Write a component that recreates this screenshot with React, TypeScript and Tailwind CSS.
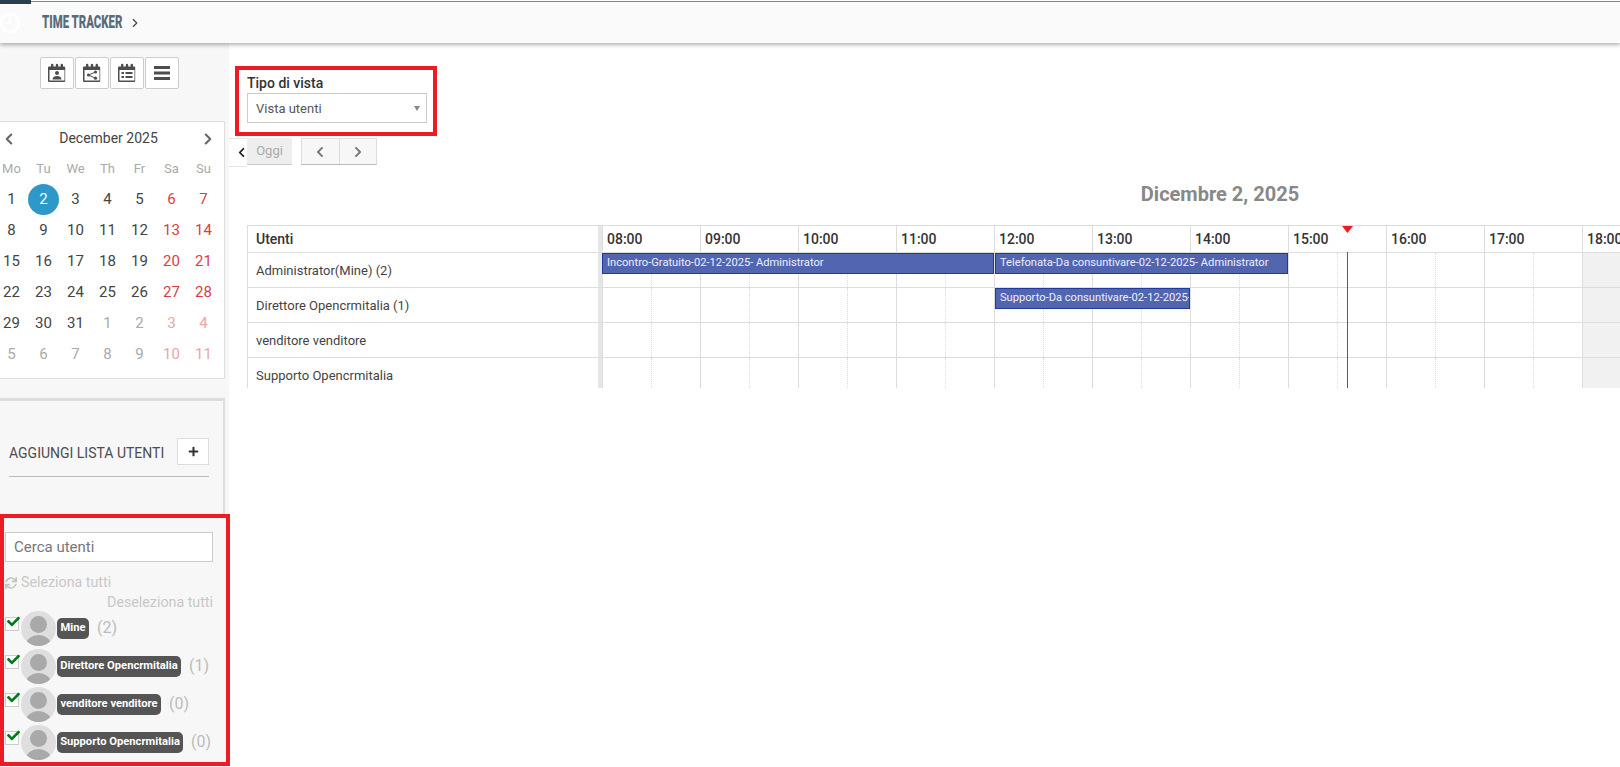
import { ChevronLeft, ChevronRight } from "lucide-react";
import { FaCheck, FaChevronLeft, FaChevronRight, FaPlus, FaSync } from "react-icons/fa";

const WEEK = ["Mo", "Tu", "We", "Th", "Fr", "Sa", "Su"];
const DAYS: { d: number; out?: boolean }[] = [
  ...Array.from({ length: 31 }, (_, i) => ({ d: i + 1 })),
  ...Array.from({ length: 11 }, (_, i) => ({ d: i + 1, out: true })),
];
const HOURS = ["08:00", "09:00", "10:00", "11:00", "12:00", "13:00", "14:00", "15:00", "16:00", "17:00", "18:00"];
const ROWS = ["Administrator(Mine) (2)", "Direttore Opencrmitalia (1)", "venditore venditore", "Supporto Opencrmitalia"];
const USERS = [
  { name: "Mine", count: "(2)", w: "w-[32px]" },
  { name: "Direttore Opencrmitalia", count: "(1)", w: "w-[124px]" },
  { name: "venditore venditore", count: "(0)", w: "w-[104px]" },
  { name: "Supporto Opencrmitalia", count: "(0)", w: "w-[126px]" },
];

function CalBase({ children }: { children: React.ReactNode }) {
  return (
    <svg width="20" height="20" viewBox="0 0 20 20" fill="#4d4d4d">
      <path d="M1 4.5a1 1 0 0 1 1-1h2V2a1.2 1.2 0 0 1 2.4 0v1.500h2.400V2a1.200 1.200 0 0 1 2.400 0v1.500h2.400V2a1.200 1.200 0 0 1 2.400 0v1.500h1.200a1 1 0 0 1 1 1V18a1 1 0 0 1-1 1H2a1 1 0 0 1-1-1z" />
      <rect x="2.500" y="7" width="15" height="10.500" fill="#fff" />
      {children}
    </svg>
  );
}

function IconButton({ children }: { children: React.ReactNode }) {
  return (
    <div className="w-[34px] h-[32px] flex items-center justify-center bg-white border border-[#ccc] rounded-[2px]">
      {children}
    </div>
  );
}

function Avatar() {
  return (
    <svg width="35" height="35" viewBox="0 0 35 35" className="shrink-0">
      <defs>
        <clipPath id="avatar-clip">
          <circle cx="17.500" cy="17.500" r="17.500" />
        </clipPath>
      </defs>
      <circle cx="17.500" cy="17.500" r="17.500" fill="#dedede" />
      <g clipPath="url(#avatar-clip)" fill="#a9a9a9">
        <circle cx="17.500" cy="13.500" r="8.500" />
        <ellipse cx="17.500" cy="34" rx="12.500" ry="10" />
      </g>
    </svg>
  );
}

function Sidebar() {
  return (
    <aside className="w-[229px] shrink-0 h-full bg-[#f7f7f7] flex flex-col overflow-hidden">
      <div className="flex justify-start gap-px pl-[40px] pt-[14px] h-[78px] shrink-0">
        <IconButton>
          <CalBase>
            <circle cx="10" cy="10" r="2" />
            <path d="M5.500 16.500c0-2.500 2-3.500 4.500-3.500s4.500 1 4.500 3.500z" />
          </CalBase>
        </IconButton>
        <IconButton>
          <CalBase>
            <circle cx="6.500" cy="12" r="1.600" />
            <circle cx="13.500" cy="9" r="1.600" />
            <circle cx="13.500" cy="15.200" r="1.600" />
            <path d="M6.500 12l7-3M6.500 12l7 3.200" stroke="#4d4d4d" strokeWidth="1" />
          </CalBase>
        </IconButton>
        <IconButton>
          <CalBase>
            <rect x="4.500" y="9" width="2.500" height="2" />
            <rect x="8.500" y="9" width="7" height="2" />
            <rect x="4.500" y="13" width="2.500" height="2" />
            <rect x="8.500" y="13" width="7" height="2" />
          </CalBase>
        </IconButton>
        <IconButton>
          <svg width="16" height="14" viewBox="0 0 16 14" fill="#4d4d4d">
            <rect x="0" y="0" width="16" height="3" />
            <rect x="0" y="5.500" width="16" height="3" />
            <rect x="0" y="11" width="16" height="3" />
          </svg>
        </IconButton>
      </div>

      <div className="w-[225px] h-[258px] shrink-0 bg-white border-r border-b border-t border-[#ddd]">
        <div className="flex items-center justify-between pr-[7px] h-[33px]">
          <ChevronLeft size={18} strokeWidth={2.750} color="#666" />
          <span className="text-[14px] text-[#444]">December 2025</span>
          <ChevronRight size={18} strokeWidth={2.750} color="#666" />
        </div>
        <div className="grid grid-cols-7 w-[224px] -ml-[4.500px] text-center">
          {WEEK.map((w) => (
            <div key={w} className="h-[29px] leading-[28px] text-[13px] text-[#aaa]">{w}</div>
          ))}
          {DAYS.map((x, i) => {
            const weekend = i % 7 >= 5;
            const selected = !x.out && x.d === 2;
            let color = "text-[#444]";
            if (x.out) color = weekend ? "text-[#eda5a5]" : "text-[#aaa]";
            else if (weekend) color = "text-[#dc3c42]";
            return (
              <div key={i} className="h-[31px] flex items-center justify-center">
                <span className={`w-[31px] h-[31px] rounded-full flex items-center justify-center text-[15px] ${selected ? "bg-[#2e99c9] text-white" : color}`}>
                  {x.d}
                </span>
              </div>
            );
          })}
        </div>
      </div>

      <div className="mt-[19px] w-[225px] flex-1 border-t-[3px] border-r-[2px] border-[#ddd] flex flex-col">
        <div className="pl-[9px] pr-[14px] pt-[37px] h-[114px] shrink-0">
          <div className="flex items-center justify-between pb-[11px] border-b border-[#bbb]">
            <span className="text-[14px] text-[#4d4d4d] pt-[3px]">AGGIUNGI LISTA UTENTI</span>
            <span className="w-[32px] h-[27px] flex items-center justify-center bg-white border border-[#ddd]">
              <FaPlus size={11} color="#333" />
            </span>
          </div>
        </div>
      </div>
    </aside>
  );
}

function UserFilter() {
  return (
    <section className="absolute left-0 top-[514px] w-[230px] h-[252px] border-4 border-[#ed1c24] bg-[#f7f7f7] pl-px pr-[13px] pt-[14px]">
      <div className="h-[30px] bg-white border border-[#ccc] px-[8px] flex items-center text-[15px] text-[#777]">Cerca utenti</div>
      <div className="flex items-center gap-[4px] h-[20px] mt-[11px] text-[14.250px] text-[#c8c8c8]">
        <FaSync size={12} color="#c4c4c4" />
        <span>Seleziona tutti</span>
      </div>
      <div className="text-right h-[19px] leading-[19px] text-[14.250px] text-[#c8c8c8]">Deseleziona tutti</div>
      <div className="flex flex-col mt-[-3px]">
        {USERS.map((u) => (
          <div key={u.name} className="h-[38px] flex items-center">
            <span className="relative w-[14px] h-[14px] mb-[9px] mr-[2px] shrink-0 bg-white border border-[#ccc]">
              <FaCheck size={13} color="#007a1c" className="absolute left-px -top-[3px]" />
            </span>
            <Avatar />
            <span className={`h-[21px] ml-px flex items-center justify-center rounded-[5px] bg-[#555] text-white text-[11.200px] font-bold whitespace-nowrap shrink-0 ${u.w}`}>
              {u.name}
            </span>
            <span className="ml-[8px] text-[16px] text-[#bbb]">{u.count}</span>
          </div>
        ))}
      </div>
    </section>
  );
}

function HourCells() {
  return (
    <>
      {HOURS.map((h, i) => (
        <div key={h} className={`relative w-[98px] h-full shrink-0 border-l border-[#ddd] ${i >= 10 ? "bg-[#f1f1f1]" : ""}`}>
          <div className="absolute left-[48px] top-0 bottom-0 border-l border-dotted border-[#ddd]" />
        </div>
      ))}
    </>
  );
}

function EventBar({ text, className }: { text: string; className: string }) {
  return (
    <div className={`absolute top-0 h-[21px] bg-[#5266b0] border border-[#1f3a9e] text-[#eef] text-[11.150px] leading-[18px] pl-[4px] overflow-hidden whitespace-nowrap ${className}`}>
      {text}
    </div>
  );
}

function Timeline() {
  return (
    <div className="relative w-[1600px] h-[163px] border-l border-t border-[#ddd] overflow-hidden text-[#444]">
      <div className="flex h-[27px] border-b border-[#ddd]">
        <div className="w-[354px] shrink-0 pl-[8px] text-[14px] font-medium text-[#333] leading-[26px] border-r-[4px] border-[#e6e6e6]">Utenti</div>
        {HOURS.map((h) => (
          <div key={h} className="w-[98px] shrink-0 border-l border-[#ddd] pl-[4px] text-[14px] font-medium text-[#333] leading-[26px]">{h}</div>
        ))}
      </div>
      {ROWS.map((r, i) => (
        <div key={r} className="flex h-[35px] border-b border-[#ddd]">
          <div className="w-[354px] shrink-0 pl-[8px] pt-[10px] text-[13px] leading-[16px] border-r-[4px] border-[#e6e6e6]">{r}</div>
          <div className="relative flex h-full">
            <HourCells />
            {i === 0 && (
              <>
                <EventBar text="Incontro-Gratuito-02-12-2025- Administrator" className="left-0 w-[392px]" />
                <EventBar text="Telefonata-Da consuntivare-02-12-2025- Administrator" className="left-[393px] w-[293px]" />
              </>
            )}
            {i === 1 && <EventBar text="Supporto-Da consuntivare-02-12-2025-" className="left-[393px] w-[195px]" />}
          </div>
        </div>
      ))}
      <div className="absolute left-[1099px] top-[26px] bottom-0 w-px bg-[#ed1c24]" />
      <svg width="11" height="7" viewBox="0 0 11 7" className="absolute left-[1094px] top-0">
        <path d="M0 0h11L5.500 7z" fill="#ed1c24" />
      </svg>
    </div>
  );
}

export default function App() {
  return (
    <div className="relative w-[1620px] h-[767px] overflow-hidden bg-white flex flex-col font-['Roboto',sans-serif]">
      <header className="relative z-10 h-[43px] shrink-0 bg-[#fafafa] shadow-[0_2px_4px_rgba(0,0,0,0.3)]">
        <div className="flex h-[2px]">
          <div className="w-[31px] h-[4px] bg-[#2b3e50]" />
          <div className="flex-1 h-px mt-px bg-[#e0663e]" />
        </div>
        <div className="flex items-center h-[41px]">
          <svg width="22" height="22" viewBox="0 0 22 22" className="shrink-0 -ml-px">
            <circle cx="11" cy="11" r="9" fill="none" stroke="#fff" strokeWidth="3" />
            <path d="M11 5v6H6" fill="none" stroke="#fff" strokeWidth="1.500" />
          </svg>
          <span className="ml-[21px] w-[83px] text-[19px] font-black text-[#5a6b7b] whitespace-nowrap origin-left scale-x-[0.6]">TIME TRACKER</span>
          <ChevronRight size={14} color="#444" className="ml-[3px]" />
        </div>
      </header>

      <div className="flex flex-1 min-h-0">
        <Sidebar />
        <main className="flex-1 min-w-0 overflow-hidden">
          <div className="ml-[6px] mt-[23px] w-[202px] h-[70px] border-4 border-[#ed1c24] px-[8px]">
            <div className="text-[14px] font-medium text-[#333] leading-[20px] mt-[3px]">Tipo di vista</div>
            <div className="h-[30px] w-[180px] border border-[#ccc] flex items-center justify-between pl-[8px] pr-[6px] text-[13px] text-[#555]">
              <span className="pt-px">Vista utenti</span>
              <span className="w-0 h-0 border-l-[3.500px] border-r-[3.500px] border-t-[5px] border-l-transparent border-r-transparent border-t-[#888]" />
            </div>
          </div>
          <div className="flex items-start mt-[2px] h-[28px]">
            <div className="w-[18px] h-[29px] flex items-center justify-end border-t border-b border-[#e6e6e6]">
              <FaChevronLeft size={11} color="#222" />
            </div>
            <div className="w-[45px] h-[27px] bg-[#eee] border-b border-[#ccc] flex items-center justify-center text-[13px] text-[#aaa]">Oggi</div>
            <div className="ml-[9px] w-[76px] h-[27px] flex bg-[#f7f7f7] border border-[#ddd] border-b-[#bbb]">
              <div className="flex-1 flex items-center justify-center border-r border-[#ddd]">
                <FaChevronLeft size={12} color="#777" />
              </div>
              <div className="flex-1 flex items-center justify-center">
                <FaChevronRight size={12} color="#777" />
              </div>
            </div>
          </div>
          <div className="ml-[18px] w-[1946px] text-center text-[20px] font-bold text-[#888] leading-[24px] mt-[16px] mb-[19px]">Dicembre 2, 2025</div>
          <div className="ml-[18px]">
            <Timeline />
          </div>
        </main>
      </div>
      <UserFilter />
    </div>
  );
}
